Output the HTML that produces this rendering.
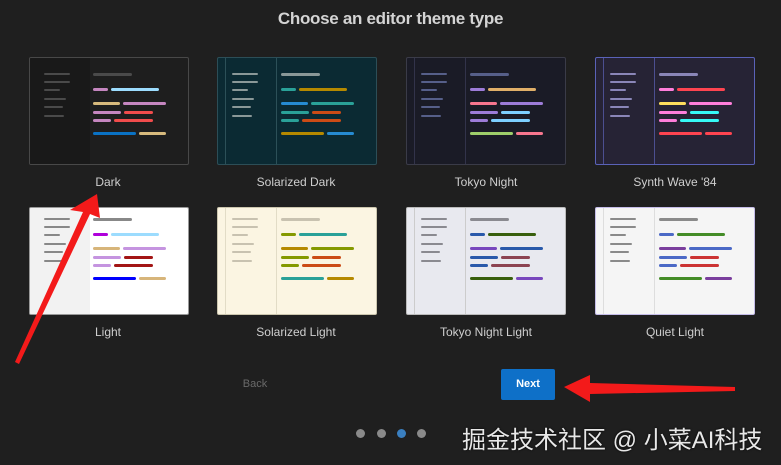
<!DOCTYPE html>
<html><head><meta charset="utf-8"><style>
body{margin:0;width:781px;height:465px;background:#1f1f1f;position:relative;overflow:hidden;font-family:"Liberation Sans","Noto Sans CJK SC",sans-serif}
.t{position:absolute;left:0;width:781px;top:9px;text-align:center;color:#d4d4d4;font-weight:bold;font-size:17px;letter-spacing:-0.3px}
.card{position:absolute;width:158px;height:106px;border:1px solid #444;border-radius:2px;overflow:hidden}
.b{position:absolute;height:3px;border-radius:2px}
.lab{position:absolute;width:190px;text-align:center;color:#cfcfcf;font-size:12px}
.side{position:absolute;left:0;top:0;bottom:0}
</style></head><body>
<div class="t">Choose an editor theme type</div>

<div id="c0" class="card" style="left:29px;top:57px;background:#1e1e1e;border-color:#484848"><div class="side" style="width:60px;background:#191919"></div></div>
<div id="c1" class="card" style="left:217px;top:57px;background:#0b2a33;border-color:#2c4e57"><div class="side" style="width:58px;border-right:1px solid #2c5058"></div><div class="side" style="width:7px;border-right:1px solid #2c5058"></div></div>
<div id="c2" class="card" style="left:406px;top:57px;background:#1a1b26;border-color:#3a3b48"><div class="side" style="width:58px;border-right:1px solid #32334a"></div><div class="side" style="width:7px;border-right:1px solid #32334a"></div></div>
<div id="c3" class="card" style="left:595px;top:57px;background:#262335;border-color:#5a62b8"><div class="side" style="width:58px;border-right:1px solid #4c4f90"></div><div class="side" style="width:7px;border-right:1px solid #4c4f90"></div></div>

<div id="c4" class="card" style="left:29px;top:207px;background:#fff;border-color:#999"><div class="side" style="width:60px;background:#f2f2f2"></div></div>
<div id="c5" class="card" style="left:217px;top:207px;background:#fbf5e2;border-color:#ccc6ae"><div class="side" style="width:58px;border-right:1px solid #e2dcc6"></div><div class="side" style="width:7px;border-right:1px solid #e2dcc6"></div></div>
<div id="c6" class="card" style="left:406px;top:207px;background:#e8e9ef;border-color:#bbb"><div class="side" style="width:58px;border-right:1px solid #ccc"></div><div class="side" style="width:7px;border-right:1px solid #ccc"></div></div>
<div id="c7" class="card" style="left:595px;top:207px;background:#f5f5f5;border-color:#c4bce8"><div class="side" style="width:58px;border-right:1px solid #ddd"></div><div class="side" style="width:7px;border-right:1px solid #ddd"></div></div>

<div class="lab" style="left:13px;top:175px">Dark</div>
<div class="lab" style="left:201px;top:175px">Solarized Dark</div>
<div class="lab" style="left:391px;top:175px">Tokyo Night</div>
<div class="lab" style="left:580px;top:175px">Synth Wave '84</div>
<div class="lab" style="left:13px;top:325px">Light</div>
<div class="lab" style="left:201px;top:325px">Solarized Light</div>
<div class="lab" style="left:391px;top:325px">Tokyo Night Light</div>
<div class="lab" style="left:580px;top:325px">Quiet Light</div>

<div style="position:absolute;left:230px;top:378px;width:50px;text-align:center;color:#6a6a6a;font-size:11px">Back</div>
<div style="position:absolute;left:501px;top:369px;width:54px;height:31px;background:#0e70c8;border-radius:2px;color:#fff;font-size:11px;font-weight:bold;text-align:center;line-height:31px">Next</div>

<div style="position:absolute;left:356px;top:429px;width:9px;height:9px;border-radius:50%;background:#8a8a8a"></div>
<div style="position:absolute;left:377px;top:429px;width:9px;height:9px;border-radius:50%;background:#8a8a8a"></div>
<div style="position:absolute;left:397px;top:429px;width:9px;height:9px;border-radius:50%;background:#3a7fc0"></div>
<div style="position:absolute;left:417px;top:429px;width:9px;height:9px;border-radius:50%;background:#8a8a8a"></div>
<div style="position:absolute;left:462px;top:420px;color:#e8e8e8;font-size:24px;font-family:'Liberation Sans','Noto Sans CJK SC',sans-serif;text-shadow:0 0 2px #000">掘金技术社区 @ 小菜AI科技</div>

<svg width="781" height="465" style="position:absolute;left:0;top:0">
<polygon points="97,194 70,210 83,212 15,362 19,364 90,214 100,218" fill="#f31a1a"/>
<polygon points="564,387 590,375 590,383 735,387 735,391 590,394 590,402" fill="#f31a1a"/>
</svg>

<script>
var T=[
 {sl:'#4a4a4a',tl:'#4a4a4a',r:[['#c586c0','#9cdcfe'],['#d7ba7d','#c586c0'],['#c586c0','#f14c4c'],['#c586c0','#f14c4c'],['#0a72c4','#d7ba7d']]},
 {sl:'#8a9898',tl:'#8a9898',r:[['#2aa198','#b58900'],['#268bd2','#2aa198'],['#2aa198','#cb4b16'],['#2aa198','#cb4b16'],['#b58900','#268bd2']]},
 {sl:'#565f89',tl:'#565f89',r:[['#9d7cd8','#e0af68'],['#f7768e','#9d7cd8'],['#9d7cd8','#7dcfff'],['#9d7cd8','#7dcfff'],['#9ece6a','#f7768e']]},
 {sl:'#8a86b8',tl:'#8a86b8',r:[['#ff7edb','#fe4450'],['#fede5d','#ff7edb'],['#ff7edb','#36f9f6'],['#ff7edb','#36f9f6'],['#fe4450','#fe4450']]},
 {sl:'#888',tl:'#888',r:[['#af00db','#9cdcfe'],['#d7b57a','#c594e0'],['#c594e0','#a31515'],['#c594e0','#a31515'],['#0000ff','#d7b57a']]},
 {sl:'#c8c2b0',tl:'#c8c2b0',r:[['#859900','#2aa198'],['#b58900','#859900'],['#859900','#cb4b16'],['#859900','#cb4b16'],['#2aa198','#b58900']]},
 {sl:'#8a8a90',tl:'#8a8a90',r:[['#2959aa','#385f0d'],['#7847bd','#2959aa'],['#2959aa','#8c4351'],['#2959aa','#8c4351'],['#385f0d','#7847bd']]},
 {sl:'#8a8a8a',tl:'#8a8a8a',r:[['#4b69c6','#448c27'],['#7a3e9d','#4b69c6'],['#4b69c6','#c33'],['#4b69c6','#c33'],['#448c27','#7a3e9d']]}
];
var sy=[15,23,31,40,48,57],sw=[26,26,16,22,19,20];
var ry=[30,44,53,61,74],w=[[15,48],[27,43],[28,29],[18,39],[43,27]];
T.forEach(function(t,i){
 var c=document.getElementById('c'+i),h='';
 var top=i>=4?-5:0;
 for(var k=0;k<6;k++)h+='<div class="b" style="left:14px;top:'+(sy[k]+top)+'px;width:'+sw[k]+'px;height:2px;background:'+t.sl+'"></div>';
 h+='<div class="b" style="left:63px;top:'+(15+top)+'px;width:39px;background:'+t.tl+'"></div>';
 for(var k=0;k<5;k++){
  h+='<div class="b" style="left:63px;top:'+(ry[k]+top)+'px;width:'+w[k][0]+'px;background:'+t.r[k][0]+'"></div>';
  h+='<div class="b" style="left:'+(66+w[k][0])+'px;top:'+(ry[k]+top)+'px;width:'+w[k][1]+'px;background:'+t.r[k][1]+'"></div>';
 }
 c.insertAdjacentHTML('beforeend',h);
});
</script>
</body></html>
